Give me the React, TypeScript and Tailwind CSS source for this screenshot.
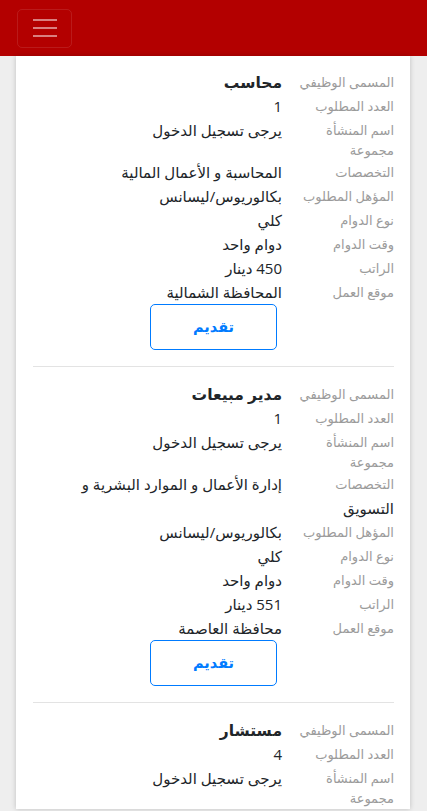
import React from "react";

type Job = {
  title: string;
  count: string;
  org: string;
  spec: string;
  qual: string;
  type: string;
  time: string;
  salary: string;
  location: string;
};

const jobs: Job[] = [
  {
    title: "محاسب",
    count: "1",
    org: "يرجى تسجيل الدخول",
    spec: "المحاسبة و الأعمال المالية",
    qual: "بكالوريوس/ليسانس",
    type: "كلي",
    time: "دوام واحد",
    salary: "450 دينار",
    location: "المحافظة الشمالية",
  },
  {
    title: "مدير مبيعات",
    count: "1",
    org: "يرجى تسجيل الدخول",
    spec: "إدارة الأعمال و الموارد البشرية و التسويق",
    qual: "بكالوريوس/ليسانس",
    type: "كلي",
    time: "دوام واحد",
    salary: "551 دينار",
    location: "محافظة العاصمة",
  },
];

function Row({ label, value, bold }: { label: string; value: string; bold?: boolean }) {
  return (
    <div className="flow-root">
      <div className="float-right w-[104px] ml-[8px] pt-[2px] text-[13px] leading-[20px] text-[#9b9b9b]">
        {label}
      </div>
      <div
        className={
          "leading-[24px] text-[#212529] " + (bold ? "font-bold text-[15.5px]" : "text-[15px]")
        }
      >
        {value}
      </div>
    </div>
  );
}

function JobItem({ job, first }: { job: Job; first: boolean }) {
  return (
    <div className={(first ? "pt-[14px] " : "pt-[15px] border-t border-[#e3e3e3] ") + "pb-[16px]"}>
      <Row label="المسمى الوظيفي" value={job.title} bold />
      <Row label="العدد المطلوب" value={job.count} />
      <Row label="اسم المنشأة مجموعة" value={job.org} />
      <Row label="التخصصات" value={job.spec} />
      <Row label="المؤهل المطلوب" value={job.qual} />
      <Row label="نوع الدوام" value={job.type} />
      <Row label="وقت الدوام" value={job.time} />
      <Row label="الراتب" value={job.salary} />
      <Row label="موقع العمل" value={job.location} />
      <div className="flex mr-[117px]">
        <button className="w-[127px] h-[46px] border border-[#007bff] rounded-[5px] text-[#007bff] text-[14.5px] font-bold bg-white">
          تقديم
        </button>
      </div>
    </div>
  );
}

export default function App() {
  return (
    <div
      dir="rtl"
      className="h-[811px] overflow-hidden bg-[#eeeeee]"
      style={{ fontFamily: '"Open Sans", "DejaVu Sans", sans-serif' }}
    >
      <header dir="ltr" className="h-[56px] bg-[#b30000] flex items-center px-[17px]">
        <button className="w-[55px] h-[39px] rounded-[5px] border border-[rgba(255,255,255,0.1)] flex flex-col items-center justify-center gap-[6px]">
          <span className="block w-[24px] h-[2px] bg-[rgba(255,255,255,0.5)]" />
          <span className="block w-[24px] h-[2px] bg-[rgba(255,255,255,0.5)]" />
          <span className="block w-[24px] h-[2px] bg-[rgba(255,255,255,0.5)]" />
        </button>
      </header>
      <main className="ml-[16px] mr-[17px] bg-white shadow-[0_0_5px_rgba(0,0,0,0.2)] pl-[17px] pr-[16px]">
        {jobs.map((j, i) => (
          <JobItem key={i} job={j} first={i === 0} />
        ))}
        <div className="pt-[15px] border-t border-[#e3e3e3] pb-[1px]">
          <Row label="المسمى الوظيفي" value="مستشار" bold />
          <Row label="العدد المطلوب" value="4" />
          <Row label="اسم المنشأة مجموعة" value="يرجى تسجيل الدخول" />
        </div>
      </main>
    </div>
  );
}
